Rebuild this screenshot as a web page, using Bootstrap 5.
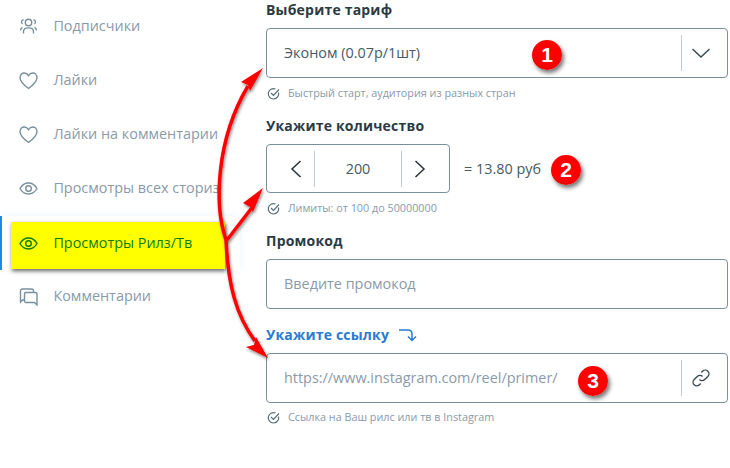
<!DOCTYPE html>
<html lang="ru"><head><meta charset="utf-8">
<link href="https://cdn.jsdelivr.net/npm/bootstrap@5.3.0/dist/css/bootstrap.min.css" rel="stylesheet">
<style>
html,body{margin:0;height:468px;overflow:hidden;background:#fff}
body{font-family:"Open Sans","Noto Sans",sans-serif;position:relative;color:#37474f}
.shell{width:730px;height:468px}
.side{width:266px;margin-top:-1px;flex:none}
.side-row{height:54px;display:flex;align-items:center;gap:15.4px;padding-left:19px;color:#8a9aa8;font-size:14.4px;white-space:nowrap}
.side-row svg{flex:none;width:19px;height:19px;stroke:#78909c;fill:none;stroke-width:1.4}
.side-active{position:relative;color:#0a7d0a}
.side-active svg{stroke:#0a7d0a}
.active-wrap{height:54px;margin:1px 26px -1px 0;border-left:2px solid #1e88e5;box-shadow:0 0 8px rgba(30,100,180,.08);position:relative;display:flex;align-items:center}
.active-hl{position:absolute;left:9px;top:6px;width:214px;height:47px;background:#ff0;box-shadow:1px 2px 4px rgba(0,0,0,.6)}
.active-row{position:relative;padding-left:17px}
.main-col{width:462px;flex:none}
.fld-title{font-weight:700;font-size:14px;line-height:20px;color:#2c3a45;letter-spacing:.2px}
.fld-box{border:1px solid #78909c;border-radius:4px;background:#fff;display:flex;align-items:center;font-size:14.4px;color:#455a64}
.fld-h50{height:50px}
.fld-h49{height:49px}
.fld-text{flex:1;padding-left:17px}
.fld-ph{color:#8a9aa8}
.fld-end{width:46px;height:36px;border-left:1px solid #c4cbd0;display:flex;align-items:center;padding-left:9px;flex:none}
.fld-hint{display:flex;align-items:center;gap:8px;font-size:10.8px;color:#8a9aa8;line-height:14px;margin-top:8px;padding-left:1px}
.hint-last{margin-top:7px}
.qty-box{width:184px;flex:none}
.qty-gap{gap:14px}
.qty-btn{width:47px;height:36px;display:flex;align-items:center;flex:none}
.qty-prev{justify-content:flex-end;padding-right:12px}
.qty-next{justify-content:flex-start;padding-left:12px}
.qty-val{flex:1;text-align:center;height:36px;line-height:36px;border-left:1px solid #c4cbd0;border-right:1px solid #c4cbd0}
.qty-sum{font-size:14.4px;color:#455a64}
.link-title{color:#2a7ad0;gap:9px}
.overlay{position:absolute;left:0;top:0;pointer-events:none}
.num-badge{position:absolute;width:30px;height:30px;border-radius:50%;background:radial-gradient(circle at 50% 40%,#f00 60%,#d00000);color:#fff;font-family:"Liberation Sans",sans-serif;font-weight:700;font-size:21px;line-height:30px;text-align:center;box-shadow:2px 3px 4px rgba(0,0,0,.55)}
.b1{left:532px;top:40px}.b2{left:551px;top:155px}.b3{left:578px;top:366px}
</style></head><body>
<div class="shell d-flex">
<nav class="side">
<div class="side-row"><svg viewBox="0 0 19 19"><circle cx="9.5" cy="5.5" r="3.2"/><path d="M4.5 16.5v-2c0-2.2 2-3.6 5-3.6s5 1.4 5 3.6v2"/><path d="M4.6 2.8A2.3 2.3 0 0 0 3.5 7M14.4 2.8A2.3 2.3 0 0 1 15.5 7M1.5 13.5c0-1.6.6-2.6 2-3.2M17.5 13.5c0-1.6-.6-2.6-2-3.2"/></svg><span>Подписчики</span></div>
<div class="side-row"><svg viewBox="0 0 19 19"><path d="M9.5 17.5C5 14.2 1 11 1 6.5 1 3.7 3 2 5.300 2c1.800 0 3.200 1 4.200 2.600C10.500 3 11.900 2 13.700 2 16 2 18 3.700 18 6.500c0 4.500-4 7.700-8.500 11z"/></svg><span>Лайки</span></div>
<div class="side-row"><svg viewBox="0 0 19 19"><path d="M9.500 17.500C5 14.200 1 11 1 6.500 1 3.700 3 2 5.300 2c1.800 0 3.200 1 4.200 2.600C10.500 3 11.900 2 13.700 2 16 2 18 3.700 18 6.500c0 4.500-4 7.700-8.500 11z"/></svg><span>Лайки на комментарии</span></div>
<div class="side-row"><svg viewBox="0 0 19 19"><path d="M1 9.500C3 6 6 4 9.500 4s6.500 2 8.500 5.500C16 13 13 15 9.500 15S3 13 1 9.500z"/><circle cx="9.500" cy="9.500" r="2.800"/></svg><span>Просмотры всех сториз</span></div>
<div class="active-wrap"><div class="active-hl"></div><div class="side-row side-active active-row"><svg viewBox="0 0 19 19"><path d="M1 9.500C3 6 6 4 9.500 4s6.500 2 8.500 5.500C16 13 13 15 9.500 15S3 13 1 9.500z"/><circle cx="9.500" cy="9.500" r="2.800"/></svg><span>Просмотры Рилз/Тв</span></div></div>
<div class="side-row"><svg viewBox="0 0 19 19"><path d="M5 13H3.500L1.500 15V4a2 2 0 0 1 2-2h9a2 2 0 0 1 2 2v1.500"/><path d="M7 5.500h9.500a1.500 1.500 0 0 1 1.500 1.500v11l-2.500-2.500H7a1.500 1.500 0 0 1-1.500-1.500V7A1.500 1.500 0 0 1 7 5.500z"/></svg><span>Комментарии</span></div>
</nav>
<main class="main-col">
<div class="fld-title">Выберите тариф</div>
<div class="fld-box fld-h50 mt-2"><span class="fld-text">Эконом (0.07р/1шт)</span><span class="fld-end"><svg width="20" height="12" viewBox="0 0 20 12" fill="none" stroke="#37474f" stroke-width="1.400"><path d="M1.500 2l8.500 8 8.500-8"/></svg></span></div>
<div class="fld-hint"><svg width="13" height="13" viewBox="0 0 13 13" fill="none" stroke="#546e7a" stroke-width="1.200"><path d="M11.500 5.500A5.200 5.200 0 1 1 8.500 2"/><path d="M4 6l2.500 2.500L12 2.500"/></svg><span>Быстрый старт, аудитория из разных стран</span></div>
<div class="fld-title mt-3">Укажите количество</div>
<div class="d-flex align-items-center qty-gap mt-2"><div class="fld-box fld-h49 qty-box"><span class="qty-btn qty-prev"><svg width="12" height="20" viewBox="0 0 12 20" fill="none" stroke="#263238" stroke-width="1.500"><path d="M10.500 2L2 10l8.500 8"/></svg></span><span class="qty-val">200</span><span class="qty-btn qty-next"><svg width="12" height="20" viewBox="0 0 12 20" fill="none" stroke="#263238" stroke-width="1.500"><path d="M1.500 2L10 10l-8.500 8"/></svg></span></div><span class="qty-sum">= 13.80 руб</span></div>
<div class="fld-hint"><svg width="13" height="13" viewBox="0 0 13 13" fill="none" stroke="#546e7a" stroke-width="1.200"><path d="M11.500 5.500A5.200 5.200 0 1 1 8.500 2"/><path d="M4 6l2.500 2.500L12 2.500"/></svg><span>Лимиты: от 100 до 50000000</span></div>
<div class="fld-title mt-3">Промокод</div>
<div class="fld-box fld-h50 mt-2"><span class="fld-text fld-ph">Введите промокод</span></div>
<div class="fld-title link-title mt-3 d-flex align-items-center">Укажите ссылку <svg width="19" height="14" viewBox="0 0 19 14" fill="none" stroke="#2a7ad0" stroke-width="1.500"><path d="M1 2h9c2.500 0 4 1.500 4 4v6M10 8.500l4 4 4-4"/></svg></div>
<div class="fld-box fld-h50 mt-2"><span class="fld-text fld-ph">https://www.instagram.com/reel/primer/</span><span class="fld-end"><svg width="20" height="20" viewBox="0 0 19 19" fill="none" stroke="#37474f" stroke-width="1.300"><path d="M8 11a3.500 3.500 0 0 0 5 0l3-3a3.500 3.500 0 0 0-5-5l-1.200 1.200"/><path d="M11 8a3.500 3.500 0 0 0-5 0l-3 3a3.500 3.500 0 0 0 5 5l1.200-1.200"/></svg></span></div>
<div class="fld-hint hint-last"><svg width="13" height="13" viewBox="0 0 13 13" fill="none" stroke="#546e7a" stroke-width="1.200"><path d="M11.500 5.500A5.200 5.200 0 1 1 8.500 2"/><path d="M4 6l2.500 2.500L12 2.500"/></svg><span>Ссылка на Ваш рилс или тв в Instagram</span></div>
</main></div>
<svg class="overlay" width="730" height="468" viewBox="0 0 730 468" fill="none">
<defs><filter id="sh" x="-20%" y="-20%" width="140%" height="140%"><feDropShadow dx="1" dy="2" stdDeviation="1.500" flood-color="#000" flood-opacity=".45"/></filter></defs>
<g filter="url(#sh)">
<g stroke="#f00" stroke-width="3.500">
<path d="M226 240C214 205 216 140 248 86"/>
<path d="M227 240L254 205"/>
<path d="M226 240C228 285 236 315 255 341"/>
</g>
<g fill="#f00">
<path d="M263 68L250 91 248 85 241 82z"/>
<path d="M263 188L253 212 250 207 243 203z"/>
<path d="M268 358L246 347 254 345 256 337z"/>
</g>
</g>
</svg>
<div class="num-badge b1">1</div><div class="num-badge b2">2</div><div class="num-badge b3">3</div>
</body></html>
